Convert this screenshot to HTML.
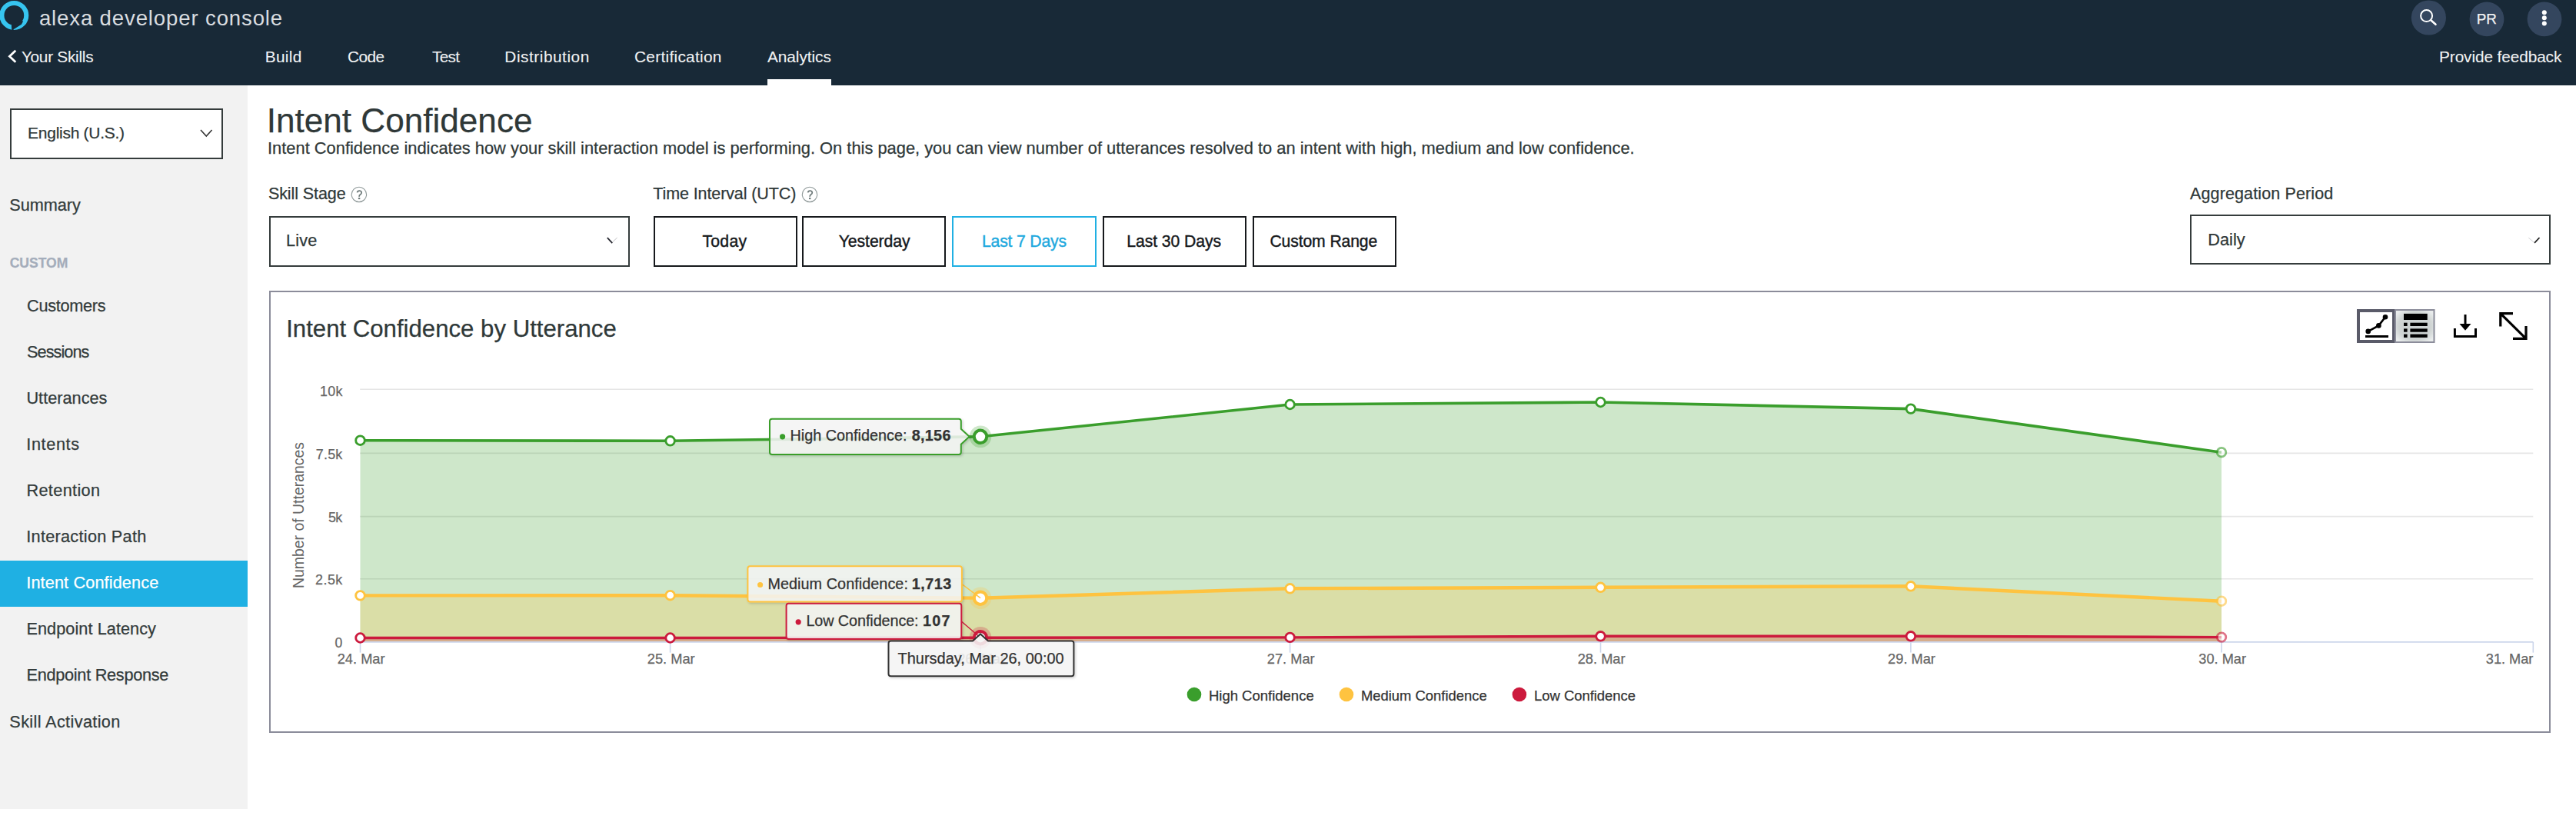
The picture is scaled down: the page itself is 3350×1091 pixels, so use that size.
<!DOCTYPE html>
<html><head><meta charset="utf-8"><title>Intent Confidence</title>
<style>
html,body{margin:0;padding:0;width:3350px;height:1091px;overflow:hidden;background:#fff;}
body{position:relative;font-family:"Liberation Sans",sans-serif;}
.t{position:absolute;line-height:0;white-space:nowrap;-webkit-text-stroke:0.25px currentColor;}
.r{position:absolute;box-sizing:border-box;}
svg{position:absolute;left:0;top:0;overflow:visible;}
</style></head><body>
<div class="r" style="left:0.0px;top:0.0px;width:3350.0px;height:110.5px;background:#182937"></div>
<svg width="3350" height="120" style="left:0;top:0">
<circle cx="18.3" cy="19.9" r="15.95" fill="none" stroke="#36c4ef" stroke-width="6.1"/>
<path d="M14.8 32.4 L15.4 40 L17.5 40 L17.6 38.3 L27.9 31.7 L30.2 27.5 L26 27 Z" fill="#182937"/>
</svg>
<div class="t" style="left:50.90px;top:23.64px;font-size:27.60px;color:#d9dde0;font-weight:400;letter-spacing:0.85px;-webkit-text-stroke:0;">alexa developer console</div>
<svg width="40" height="100" style="left:0;top:0">
<path d="M20.3 65.7 L12.4 73.2 L20.3 80.7" fill="none" stroke="#fff" stroke-width="2.8"/>
</svg>
<div class="t" style="left:27.88px;top:73.79px;font-size:20.80px;color:#f1f2f3;font-weight:400;letter-spacing:-0.266px;-webkit-text-stroke:0.1px;">Your Skills</div>
<div class="t" style="left:344.74px;top:73.79px;font-size:20.80px;color:#f1f2f3;font-weight:400;letter-spacing:0.334px;-webkit-text-stroke:0.1px;">Build</div>
<div class="t" style="left:451.96px;top:73.79px;font-size:20.80px;color:#f1f2f3;font-weight:400;letter-spacing:-0.544px;-webkit-text-stroke:0.1px;">Code</div>
<div class="t" style="left:562.08px;top:73.79px;font-size:20.80px;color:#f1f2f3;font-weight:400;letter-spacing:-0.716px;-webkit-text-stroke:0.1px;">Test</div>
<div class="t" style="left:656.34px;top:73.79px;font-size:20.80px;color:#f1f2f3;font-weight:400;letter-spacing:0.537px;-webkit-text-stroke:0.1px;">Distribution</div>
<div class="t" style="left:824.96px;top:73.79px;font-size:20.80px;color:#f1f2f3;font-weight:400;letter-spacing:0.306px;-webkit-text-stroke:0.1px;">Certification</div>
<div class="t" style="left:998.00px;top:73.79px;font-size:20.80px;color:#f1f2f3;font-weight:400;letter-spacing:-0.046px;-webkit-text-stroke:0.1px;">Analytics</div>
<div class="r" style="left:998.0px;top:102.5px;width:83.0px;height:8.0px;background:#fff"></div>
<svg width="3350" height="60" style="left:0;top:0">
<circle cx="3158.4" cy="23" r="22.6" fill="#34465e"/>
<circle cx="3234" cy="24.9" r="22.4" fill="#34465e"/>
<circle cx="3309" cy="24.9" r="22.4" fill="#34465e"/>
<circle cx="3155.6" cy="20.6" r="7.5" fill="none" stroke="#fff" stroke-width="2.0"/>
<path d="M3161.3 26.3 L3167.5 31.8" stroke="#fff" stroke-width="2.5" stroke-linecap="round"/>
<circle cx="3308.8" cy="16.3" r="3" fill="#fff"/>
<circle cx="3308.8" cy="23.3" r="3" fill="#fff"/>
<circle cx="3308.8" cy="30.4" r="3" fill="#fff"/>
</svg>
<div class="t" style="left:3220.80px;top:24.98px;font-size:18.81px;color:#f2f3f4;font-weight:400;">PR</div>
<div class="t" style="left:3172.04px;top:73.99px;font-size:20.80px;color:#f1f2f3;font-weight:400;letter-spacing:-0.095px;-webkit-text-stroke:0.1px;">Provide feedback</div>
<div class="r" style="left:0.0px;top:110.5px;width:322.0px;height:941.3px;background:#f2f2f2"></div>
<div class="r" style="left:13.4px;top:141.0px;width:276.2px;height:66.4px;background:#fff;border:2px solid #353c3c"></div>
<div class="t" style="left:36.12px;top:173.32px;font-size:21.00px;color:#2f3838;font-weight:400;letter-spacing:-0.279px;">English (U.S.)</div>
<svg width="400" height="300" style="left:0;top:0">
<path d="M261 169 L268.3 177 L275.6 169" fill="none" stroke="#333" stroke-width="1.6"/>
</svg>
<div class="t" style="left:12.32px;top:266.98px;font-size:21.70px;color:#333b3b;font-weight:400;letter-spacing:-0.048px;">Summary</div>
<div class="t" style="left:12.70px;top:342.32px;font-size:17.55px;color:#a4adbb;font-weight:700;">CUSTOM</div>
<div class="r" style="left:0.0px;top:729.1px;width:322.0px;height:59.7px;background:#1fb0e3"></div>
<div class="t" style="left:35.12px;top:398.08px;font-size:21.70px;color:#333b3b;font-weight:400;letter-spacing:-0.295px;">Customers</div>
<div class="t" style="left:35.12px;top:458.13px;font-size:21.70px;color:#333b3b;font-weight:400;letter-spacing:-0.964px;">Sessions</div>
<div class="t" style="left:34.46px;top:518.18px;font-size:21.70px;color:#333b3b;font-weight:400;letter-spacing:0.008px;">Utterances</div>
<div class="t" style="left:34.25px;top:578.23px;font-size:21.70px;color:#333b3b;font-weight:400;letter-spacing:0.620px;">Intents</div>
<div class="t" style="left:34.46px;top:638.28px;font-size:21.70px;color:#333b3b;font-weight:400;letter-spacing:0.347px;">Retention</div>
<div class="t" style="left:34.25px;top:698.33px;font-size:21.70px;color:#333b3b;font-weight:400;letter-spacing:0.277px;">Interaction Path</div>
<div class="t" style="left:34.25px;top:758.38px;font-size:21.70px;color:#ffffff;font-weight:400;letter-spacing:0.126px;">Intent Confidence</div>
<div class="t" style="left:34.46px;top:818.43px;font-size:21.70px;color:#333b3b;font-weight:400;letter-spacing:0.060px;">Endpoint Latency</div>
<div class="t" style="left:34.46px;top:878.48px;font-size:21.70px;color:#333b3b;font-weight:400;letter-spacing:-0.270px;">Endpoint Response</div>
<div class="t" style="left:12.32px;top:938.88px;font-size:21.70px;color:#333b3b;font-weight:400;letter-spacing:0.362px;">Skill Activation</div>
<div class="t" style="left:346.63px;top:157.01px;font-size:44.13px;color:#2f3838;font-weight:400;">Intent Confidence</div>
<div class="t" style="left:348.03px;top:193.42px;font-size:21.87px;color:#2f3838;font-weight:400;">Intent Confidence indicates how your skill interaction model is performing. On this page, you can view number of utterances resolved to an intent with high, medium and low confidence.</div>
<div class="t" style="left:348.93px;top:251.85px;font-size:21.50px;color:#2f3838;font-weight:400;letter-spacing:-0.084px;">Skill Stage</div>
<svg width="3350" height="400" style="left:0;top:0"><circle cx="466.9" cy="252.9" r="9.7" fill="none" stroke="#8f9999" stroke-width="1.1"/><path d="M464.50 250.40 Q464.90 248.00 467.30 248.00 Q470.20 248.10 470.20 250.60 Q470.20 252.10 468.50 253.10 Q467.10 253.90 467.10 255.70" fill="none" stroke="#6f7b7b" stroke-width="1.75"/><rect x="465.90" y="257.00" width="2.4" height="2.1" fill="#6f7b7b"/></svg>
<div class="r" style="left:350.0px;top:281.0px;width:468.6px;height:65.5px;background:#fff;border:2px solid #353c3c"></div>
<div class="t" style="left:372.06px;top:313.48px;font-size:21.70px;color:#2f3838;font-weight:400;letter-spacing:0.198px;">Live</div>
<svg width="3350" height="400" style="left:0;top:0">
<path d="M789.8 309.1 L796.3 316.2" fill="none" stroke="#25262e" stroke-width="1.8"/>
<path d="M796.5 314.8 L802.6 309.1" fill="none" stroke="#b8b8bc" stroke-width="0.9"/>
</svg>
<div class="t" style="left:849.27px;top:251.85px;font-size:21.50px;color:#2f3838;font-weight:400;letter-spacing:-0.105px;">Time Interval (UTC)</div>
<svg width="3350" height="400" style="left:0;top:0"><circle cx="1053" cy="252.9" r="9.7" fill="none" stroke="#8f9999" stroke-width="1.1"/><path d="M1050.60 250.40 Q1051.00 248.00 1053.40 248.00 Q1056.30 248.10 1056.30 250.60 Q1056.30 252.10 1054.60 253.10 Q1053.20 253.90 1053.20 255.70" fill="none" stroke="#6f7b7b" stroke-width="1.75"/><rect x="1052.00" y="257.00" width="2.4" height="2.1" fill="#6f7b7b"/></svg>
<div class="r" style="left:850.0px;top:281.0px;width:187.0px;height:65.5px;background:#fff;border:2.4px solid #16191c"></div>
<div class="t" style="left:913.38px;top:314.15px;font-size:21.20px;color:#16191c;font-weight:400;letter-spacing:0.305px;-webkit-text-stroke:0.4px #16191c;">Today</div>
<div class="r" style="left:1043.0px;top:281.0px;width:187.0px;height:65.5px;background:#fff;border:2.4px solid #16191c"></div>
<div class="t" style="left:1090.78px;top:314.15px;font-size:21.20px;color:#16191c;font-weight:400;letter-spacing:-0.084px;-webkit-text-stroke:0.4px #16191c;">Yesterday</div>
<div class="r" style="left:1238.3px;top:281.0px;width:188.0px;height:65.5px;background:#fff;border:2.4px solid #20b0e3"></div>
<div class="t" style="left:1277.00px;top:314.15px;font-size:21.20px;color:#1fa9de;font-weight:400;letter-spacing:-0.189px;-webkit-text-stroke:0.4px #1fa9de;">Last 7 Days</div>
<div class="r" style="left:1434.0px;top:281.0px;width:187.0px;height:65.5px;background:#fff;border:2.4px solid #16191c"></div>
<div class="t" style="left:1465.30px;top:314.15px;font-size:21.20px;color:#16191c;font-weight:400;letter-spacing:-0.088px;-webkit-text-stroke:0.4px #16191c;">Last 30 Days</div>
<div class="r" style="left:1629.2px;top:281.0px;width:187.0px;height:65.5px;background:#fff;border:2.4px solid #16191c"></div>
<div class="t" style="left:1651.44px;top:314.15px;font-size:21.20px;color:#16191c;font-weight:400;letter-spacing:-0.135px;-webkit-text-stroke:0.4px #16191c;">Custom Range</div>
<div class="t" style="left:2848.00px;top:251.55px;font-size:21.50px;color:#2f3838;font-weight:400;letter-spacing:0.127px;">Aggregation Period</div>
<div class="r" style="left:2847.6px;top:279.4px;width:469.0px;height:65.1px;background:#fff;border:2px solid #353c3c"></div>
<div class="t" style="left:2871.26px;top:311.78px;font-size:21.70px;color:#2f3838;font-weight:400;letter-spacing:0.040px;">Daily</div>
<svg width="3350" height="400" style="left:0;top:0">
<path d="M3288.3 309.2 L3295 314.8" fill="none" stroke="#cfcfd2" stroke-width="1"/>
<path d="M3296 315.8 L3302.5 309" fill="none" stroke="#222" stroke-width="1.8"/>
</svg>
<div class="r" style="left:350.0px;top:377.7px;width:2967.0px;height:575.5px;border:2px solid #8b8c9a"></div>
<div class="t" style="left:372.19px;top:427.50px;font-size:31.17px;color:#2f3838;font-weight:400;">Intent Confidence by Utterance</div>
<svg width="3350" height="500" style="left:0;top:0">
<defs><radialGradient id="tg" cx="50%" cy="50%" r="60%"><stop offset="0%" stop-color="#c9cfcf"/><stop offset="70%" stop-color="#cfd4d3"/><stop offset="100%" stop-color="#e9ecec"/></radialGradient></defs>
<rect x="3067" y="404" width="46" height="40" fill="#fff" stroke="#5a5b69" stroke-width="4"/>
<rect x="3115" y="403" width="50.5" height="42" fill="url(#tg)" stroke="#8b8c9a" stroke-width="2"/>
<path d="M3079.7 430.9 L3093.4 423.4 L3102 412.2" fill="none" stroke="#000" stroke-width="2.6"/>
<circle cx="3079.7" cy="430.9" r="3.3" fill="#000"/>
<circle cx="3093.4" cy="423.4" r="3.3" fill="#000"/>
<circle cx="3102" cy="412.2" r="3.3" fill="#000"/>
<rect x="3076" y="436" width="30" height="3" fill="#000"/>
<rect x="3126" y="407.9" width="30.7" height="8.1" fill="#000"/>
<rect x="3126" y="419.7" width="4.6" height="4.3" fill="#000"/>
<rect x="3134.4" y="419.7" width="22.3" height="4.3" fill="#000"/>
<rect x="3126" y="427.4" width="4.6" height="4.3" fill="#000"/>
<rect x="3134.4" y="427.4" width="22.3" height="4.3" fill="#000"/>
<rect x="3126" y="434.6" width="4.6" height="4.3" fill="#000"/>
<rect x="3134.4" y="434.6" width="22.3" height="4.3" fill="#000"/>
<path d="M3206 409 L3206 423" stroke="#000" stroke-width="3"/>
<path d="M3198.5 421 L3213.5 421 L3206 429.8 Z" fill="#000"/>
<path d="M3192.4 427 L3192.4 437.4 L3219.5 437.4 L3219.5 427" fill="none" stroke="#000" stroke-width="3"/>
<path d="M3251.8 424.5 L3251.8 407.6 L3268 407.6 M3251.8 407.6 L3285 440.3 M3285 424 L3285 440.3 L3268 440.3" fill="none" stroke="#000" stroke-width="3.2"/>
</svg>
<svg width="3350" height="1091" style="left:0;top:0">
<path d="M468.2 506.3 L3294.3 506.3" stroke="#e6e6e6" stroke-width="1.6"/>
<path d="M468.2 589.4 L3294.3 589.4" stroke="#e6e6e6" stroke-width="1.6"/>
<path d="M468.2 671.6 L3294.3 671.6" stroke="#e6e6e6" stroke-width="1.6"/>
<path d="M468.2 752.7 L3294.3 752.7" stroke="#e6e6e6" stroke-width="1.6"/>
<polygon points="468.5,572.7 871.6,573.3 1275.0,567.8 1677.6,526.0 2081.5,523.0 2484.9,531.6 2889.0,588.2 2889.0,834.9 468.5,834.9" fill="#3a9e2c" fill-opacity="0.25"/>
<polygon points="468.5,774.4 871.6,774.2 1275.0,777.7 1677.6,765.3 2081.5,763.8 2484.9,762.3 2889.0,781.7 2889.0,834.9 468.5,834.9" fill="#fec340" fill-opacity="0.25"/>
<polygon points="468.5,829.5 871.6,829.5 1275.0,829.2 1677.6,828.9 2081.5,827.3 2484.9,827.3 2889.0,828.6 2889.0,834.9 468.5,834.9" fill="#cc1a3d" fill-opacity="0.25"/>
<path d="M468.2 834.9 L3294.3 834.9" stroke="#ccd6eb" stroke-width="1.6"/>
<path d="M468.5 834.9 L468.5 848.6" stroke="#ccd6eb" stroke-width="1.6"/>
<path d="M871.6 834.9 L871.6 848.6" stroke="#ccd6eb" stroke-width="1.6"/>
<path d="M1275.0 834.9 L1275.0 848.6" stroke="#ccd6eb" stroke-width="1.6"/>
<path d="M1677.6 834.9 L1677.6 848.6" stroke="#ccd6eb" stroke-width="1.6"/>
<path d="M2081.5 834.9 L2081.5 848.6" stroke="#ccd6eb" stroke-width="1.6"/>
<path d="M2484.9 834.9 L2484.9 848.6" stroke="#ccd6eb" stroke-width="1.6"/>
<path d="M2889.0 834.9 L2889.0 848.6" stroke="#ccd6eb" stroke-width="1.6"/>
<path d="M3294.3 834.9 L3294.3 848.6" stroke="#ccd6eb" stroke-width="1.6"/>
<polyline points="468.5,572.7 871.6,573.3 1275.0,567.8 1677.6,526.0 2081.5,523.0 2484.9,531.6 2889.0,588.2" fill="none" stroke="#3a9e2c" stroke-width="3.6" stroke-linejoin="round"/>
<polyline points="468.5,774.4 871.6,774.2 1275.0,777.7 1677.6,765.3 2081.5,763.8 2484.9,762.3 2889.0,781.7" fill="none" stroke="#fec340" stroke-width="4.4" stroke-linejoin="round"/>
<polyline points="468.5,829.5 871.6,829.5 1275.0,829.2 1677.6,828.9 2081.5,827.3 2484.9,827.3 2889.0,828.6" fill="none" stroke="#cc1a3d" stroke-width="3.4" stroke-linejoin="round"/>
<circle cx="468.5" cy="572.7" r="5.8" fill="#fff" stroke="#3a9e2c" stroke-width="2.8"/>
<circle cx="871.6" cy="573.3" r="5.8" fill="#fff" stroke="#3a9e2c" stroke-width="2.8"/>
<circle cx="1677.6" cy="526.0" r="5.8" fill="#fff" stroke="#3a9e2c" stroke-width="2.8"/>
<circle cx="2081.5" cy="523.0" r="5.8" fill="#fff" stroke="#3a9e2c" stroke-width="2.8"/>
<circle cx="2484.9" cy="531.6" r="5.8" fill="#fff" stroke="#3a9e2c" stroke-width="2.8"/>
<circle cx="2889.0" cy="588.2" r="5.8" fill="#fff" stroke="#3a9e2c" stroke-width="2.8" opacity="0.6"/>
<circle cx="468.5" cy="774.4" r="5.8" fill="#fff" stroke="#fec340" stroke-width="2.8"/>
<circle cx="871.6" cy="774.2" r="5.8" fill="#fff" stroke="#fec340" stroke-width="2.8"/>
<circle cx="1677.6" cy="765.3" r="5.8" fill="#fff" stroke="#fec340" stroke-width="2.8"/>
<circle cx="2081.5" cy="763.8" r="5.8" fill="#fff" stroke="#fec340" stroke-width="2.8"/>
<circle cx="2484.9" cy="762.3" r="5.8" fill="#fff" stroke="#fec340" stroke-width="2.8"/>
<circle cx="2889.0" cy="781.7" r="5.8" fill="#fff" stroke="#fec340" stroke-width="2.8" opacity="0.6"/>
<circle cx="468.5" cy="829.5" r="5.8" fill="#fff" stroke="#cc1a3d" stroke-width="2.8"/>
<circle cx="871.6" cy="829.5" r="5.8" fill="#fff" stroke="#cc1a3d" stroke-width="2.8"/>
<circle cx="1677.6" cy="828.9" r="5.8" fill="#fff" stroke="#cc1a3d" stroke-width="2.8"/>
<circle cx="2081.5" cy="827.3" r="5.8" fill="#fff" stroke="#cc1a3d" stroke-width="2.8"/>
<circle cx="2484.9" cy="827.3" r="5.8" fill="#fff" stroke="#cc1a3d" stroke-width="2.8"/>
<circle cx="2889.0" cy="828.6" r="5.8" fill="#fff" stroke="#cc1a3d" stroke-width="2.8" opacity="0.6"/>
</svg>
<div class="t" style="left:416.07px;top:509.40px;font-size:17.90px;color:#666666;font-weight:400;letter-spacing:0.207px;">10k</div>
<div class="t" style="left:410.71px;top:590.70px;font-size:17.90px;color:#666666;font-weight:400;letter-spacing:0.255px;">7.5k</div>
<div class="t" style="left:426.98px;top:672.70px;font-size:17.90px;color:#666666;font-weight:400;letter-spacing:-0.658px;">5k</div>
<div class="t" style="left:410.00px;top:753.60px;font-size:17.90px;color:#666666;font-weight:400;letter-spacing:0.488px;">2.5k</div>
<div class="t" style="left:435.40px;top:835.70px;font-size:17.60px;color:#666666;font-weight:400;">0</div>
<div style="position:absolute;left:388.2px;top:670.2px;width:0;height:0;"><div style="position:absolute;left:0;top:0;transform:translate(-50%,-50%) rotate(-90deg);white-space:nowrap;font-size:19.45px;line-height:20px;color:#666">Number of Utterances</div></div>
<div class="t" style="left:438.69px;top:856.57px;font-size:18.26px;color:#666666;font-weight:400;">24. Mar</div>
<div class="t" style="left:841.79px;top:856.57px;font-size:18.26px;color:#666666;font-weight:400;">25. Mar</div>
<div class="t" style="left:1245.19px;top:856.57px;font-size:18.26px;color:#666666;font-weight:400;">26. Mar</div>
<div class="t" style="left:1647.79px;top:856.57px;font-size:18.26px;color:#666666;font-weight:400;">27. Mar</div>
<div class="t" style="left:2051.69px;top:856.57px;font-size:18.26px;color:#666666;font-weight:400;">28. Mar</div>
<div class="t" style="left:2455.09px;top:856.57px;font-size:18.26px;color:#666666;font-weight:400;">29. Mar</div>
<div class="t" style="left:2859.37px;top:856.59px;font-size:18.20px;color:#666666;font-weight:400;">30. Mar</div>
<div class="t" style="left:3232.77px;top:856.59px;font-size:18.20px;color:#666666;font-weight:400;">31. Mar</div>
<svg width="3350" height="1091" style="left:0;top:0">
<circle cx="1275.0" cy="567.8" r="14.3" fill="#3a9e2c" fill-opacity="0.25"/>
<circle cx="1275.0" cy="567.8" r="8.2" fill="#fff" stroke="#3a9e2c" stroke-width="4"/>
<circle cx="1275.0" cy="777.7" r="14.3" fill="#fec340" fill-opacity="0.25"/>
<circle cx="1275.0" cy="777.7" r="8.2" fill="#fff" stroke="#fec340" stroke-width="4"/>
<circle cx="1275.0" cy="829.2" r="14.3" fill="#cc1a3d" fill-opacity="0.25"/>
<circle cx="1275.0" cy="829.2" r="8.2" fill="#fff" stroke="#cc1a3d" stroke-width="4"/>
<defs><filter id="sh" x="-10%" y="-20%" width="130%" height="160%"><feDropShadow dx="1.5" dy="1.5" stdDeviation="1.5" flood-color="#000" flood-opacity="0.18"/></filter></defs>
<path filter="url(#sh)" d="M1004 544.8 L1246.8 544.8 Q1249.8 544.8 1249.8 547.8 L1249.8 557.8 L1260.6 567.8 L1249.8 577.8 L1249.8 587.9 Q1249.8 590.9 1246.8 590.9 L1004 590.9 Q1001 590.9 1001 587.9 L1001 547.8 Q1001 544.8 1004 544.8 Z" fill="#f7f7f7" fill-opacity="0.85" stroke="#3a9e2c" stroke-width="2"/>
<path d="M1250.9 759.5 L1275 777.7" stroke="#fec340" stroke-width="1.5"/>
<rect filter="url(#sh)" x="972.4" y="736.3" width="278.5000000000001" height="46.200000000000045" rx="3" fill="#f7f7f7" fill-opacity="0.85" stroke="#fec340" stroke-width="2"/>
<path d="M1250.3 808 L1275 829.2" stroke="#cc1a3d" stroke-width="1.5"/>
<rect filter="url(#sh)" x="1022.6" y="784.7" width="227.69999999999993" height="46.299999999999955" rx="3" fill="#f7f7f7" fill-opacity="0.85" stroke="#cc1a3d" stroke-width="2"/>
<path filter="url(#sh)" d="M1158.5 833.6 L1265 833.6 L1275 824.4 L1285 833.6 L1393.4 833.6 Q1396.4 833.6 1396.4 836.6 L1396.4 876.3 Q1396.4 879.3 1393.4 879.3 L1158.5 879.3 Q1155.5 879.3 1155.5 876.3 L1155.5 836.6 Q1155.5 833.6 1158.5 833.6 Z" fill="#f7f7f7" fill-opacity="0.86" stroke="#333" stroke-width="2"/>
<circle cx="1017.6" cy="567.8" r="3.6" fill="#3a9e2c"/>
<circle cx="988.6" cy="760.5" r="3.6" fill="#fec340"/>
<circle cx="1038.2" cy="808.8" r="3.6" fill="#cc1a3d"/>
</svg>
<div class="t" style="left:1027.42px;top:566.14px;font-size:19.80px;color:#333333;font-weight:400;letter-spacing:0.020px;">High Confidence:</div>
<div class="t" style="left:1185.71px;top:566.14px;font-size:19.80px;color:#333333;font-weight:700;letter-spacing:0.297px;">8,156</div>
<div class="t" style="left:998.42px;top:759.04px;font-size:19.80px;color:#333333;font-weight:400;letter-spacing:0.065px;">Medium Confidence:</div>
<div class="t" style="left:1185.81px;top:759.04px;font-size:19.80px;color:#333333;font-weight:700;letter-spacing:0.470px;">1,713</div>
<div class="t" style="left:1048.42px;top:807.14px;font-size:19.80px;color:#333333;font-weight:400;letter-spacing:-0.082px;">Low Confidence:</div>
<div class="t" style="left:1200.11px;top:807.14px;font-size:19.80px;color:#333333;font-weight:700;letter-spacing:1.206px;">107</div>
<div class="t" style="left:1167.50px;top:855.67px;font-size:19.99px;color:#333333;font-weight:400;">Thursday, Mar 26, 00:00</div>
<svg width="3350" height="1091" style="left:0;top:0">
<circle cx="1553" cy="903" r="9.3" fill="#3a9e2c"/>
<circle cx="1751" cy="903" r="9.3" fill="#fec340"/>
<circle cx="1975.9" cy="903" r="9.3" fill="#cc1a3d"/>
</svg>
<div class="t" style="left:1571.92px;top:904.58px;font-size:18.51px;color:#333333;font-weight:400;">High Confidence</div>
<div class="t" style="left:1769.93px;top:904.62px;font-size:18.43px;color:#333333;font-weight:400;">Medium Confidence</div>
<div class="t" style="left:1995.03px;top:904.62px;font-size:18.42px;color:#333333;font-weight:400;">Low Confidence</div>
</body></html>
